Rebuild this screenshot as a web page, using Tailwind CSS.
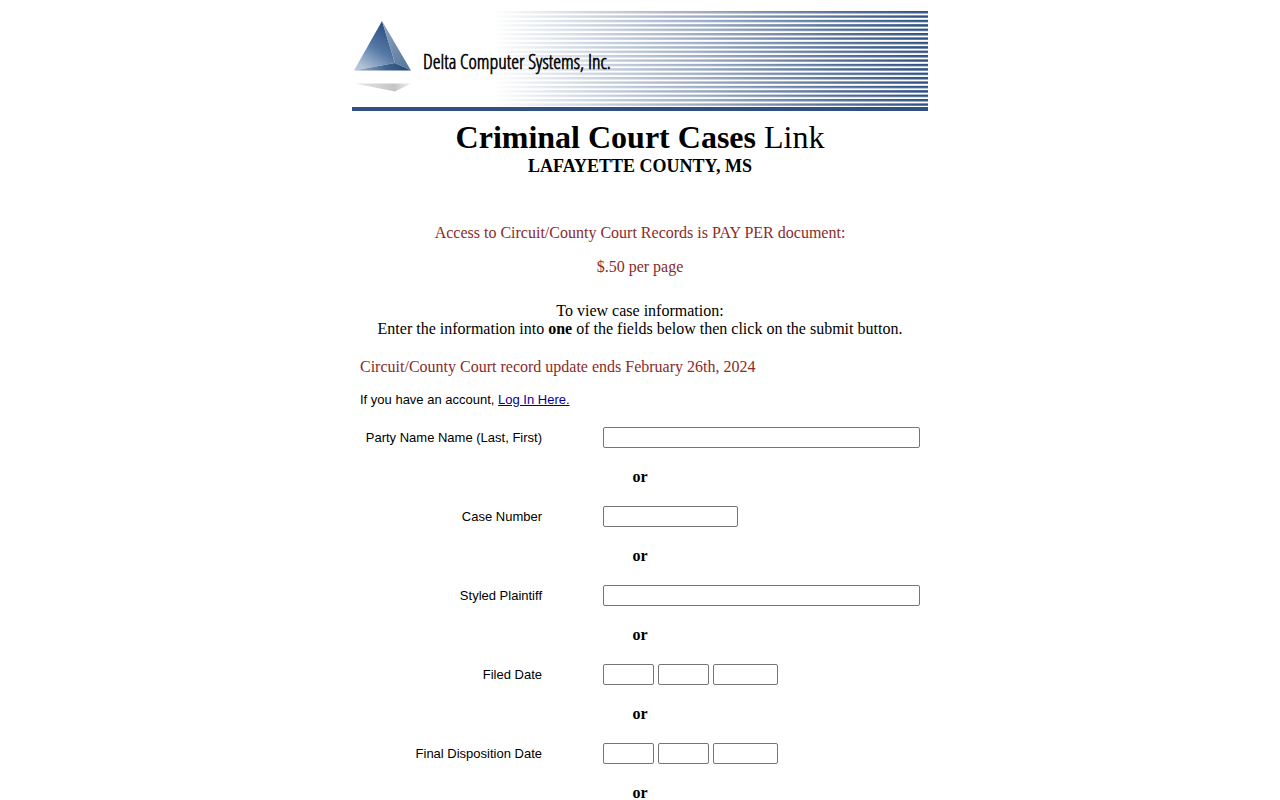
<!DOCTYPE html>
<html lang="en">

<head>
  <meta charset="UTF-8">
  <title>Criminal Court Cases Link</title>
  <script src="https://cdn.jsdelivr.net/npm/@tailwindcss/browser@4"></script>
</head>

<body class="bg-white text-black font-['Liberation_Serif',serif] text-base leading-[18px]">

  <div class="w-[45%] min-w-[560px] mx-auto pt-2">
    <header>
      <svg viewBox="0 0 576 103" class="block w-full" role="img" aria-label="Delta Computer Systems, Inc.">
        <defs>
          <linearGradient id="fade" gradientUnits="userSpaceOnUse" x1="140" y1="0" x2="576" y2="0">
            <stop offset="0" stop-color="#2e5080" stop-opacity="0" />
            <stop offset="0.25" stop-color="#2e5080" stop-opacity="0.26" />
            <stop offset="0.5" stop-color="#2e5080" stop-opacity="0.5" />
            <stop offset="0.8" stop-color="#2e5080" stop-opacity="0.82" />
            <stop offset="1" stop-color="#2e5080" />
          </linearGradient>
          <linearGradient id="front" x1="0.8" y1="0.1" x2="0.3" y2="1">
            <stop offset="0" stop-color="#2b5083" />
            <stop offset="0.5" stop-color="#5578a5" />
            <stop offset="1" stop-color="#b4c5da" />
          </linearGradient>
          <linearGradient id="side" x1="0" y1="0" x2="0.7" y2="1">
            <stop offset="0" stop-color="#8fa6c4" />
            <stop offset="1" stop-color="#5b789e" />
          </linearGradient>
          <linearGradient id="base" x1="0" y1="0" x2="1" y2="0">
            <stop offset="0" stop-color="#a3b6cf" />
            <stop offset="0.55" stop-color="#426593" />
            <stop offset="1" stop-color="#1d4274" />
          </linearGradient>
          <linearGradient id="shadow" x1="0" y1="0" x2="1" y2="0">
            <stop offset="0" stop-color="#e8e8e8" />
            <stop offset="0.7" stop-color="#c4c4c4" />
            <stop offset="1" stop-color="#f0f0f0" />
          </linearGradient>
          <pattern id="stripes" patternUnits="userSpaceOnUse" x="0" y="3" width="576" height="4.4">
            <rect width="576" height="2.4" fill="url(#fade)" />
          </pattern>
        </defs>
        <rect x="144" y="3" width="432" height="95" fill="url(#stripes)" />
        <rect y="99" width="576" height="4" fill="#2f5080" />
        <path d="M30 13 L2 62.500 L43 55 Z" fill="url(#front)" />
        <path d="M30 13 L43 55 L59 62.500 Z" fill="url(#side)" />
        <path d="M2 62.500 L43 55 L59 62.500 Z" fill="url(#base)" />
        <path d="M3 75.500 L59 75.500 L43 83.500 Z" fill="url(#shadow)" />
        <text x="71" y="61" font-size="20" stroke="#000" stroke-width="0.6" class="font-light font-['Open_Sans_Condensed_Light','Open_Sans_Condensed',sans-serif]">Delta Computer Systems, Inc.</text>
      </svg>
    </header>

    <main class="px-2 pt-2">
      <div class="text-center">
        <h1 class="text-[32px] leading-[37px]"><b>Criminal Court Cases</b> Link</h1>
        <h2 class="text-lg leading-5 font-bold">LAFAYETTE COUNTY, MS</h2>

        <div class="mt-12 text-[#892b2b]">
          <p>Access to Circuit/County Court Records is PAY PER document:</p>
          <p class="mt-4">$.50 per page</p>
        </div>

        <p class="mt-[26px]">To view case information:<br>
          Enter the information into <b>one</b> of the fields below then click on the submit button.</p>
      </div>

      <p class="mt-5 text-[#892b2b]">Circuit/County Court record update ends February 26th, 2024</p>
      <p class="mt-[15px] text-[13px] font-['Liberation_Sans',sans-serif]">If you have an account, <a href="#" class="text-[#0000a0] underline">Log In Here.</a></p>

      <form class="mt-[9px]">
        <div class="grid grid-cols-[182fr_317fr] gap-x-[61px] h-[39px] items-center">
          <label for="party" class="text-right text-[13px] font-['Liberation_Sans',sans-serif]">Party Name Name (Last, First)</label>
          <input type="text" id="party" class="w-full h-[21px] border border-[#767676] rounded-xs px-1 text-sm">
        </div>
        <p class="h-10 leading-10 text-center font-bold">or</p>

        <div class="grid grid-cols-[182fr_317fr] gap-x-[61px] h-[39px] items-center">
          <label for="case-number" class="text-right text-[13px] font-['Liberation_Sans',sans-serif]">Case Number</label>
          <input type="text" id="case-number" class="w-[135px] h-[21px] border border-[#767676] rounded-xs px-1 text-sm">
        </div>
        <p class="h-10 leading-10 text-center font-bold">or</p>

        <div class="grid grid-cols-[182fr_317fr] gap-x-[61px] h-[39px] items-center">
          <label for="plaintiff" class="text-right text-[13px] font-['Liberation_Sans',sans-serif]">Styled Plaintiff</label>
          <input type="text" id="plaintiff" class="w-full h-[21px] border border-[#767676] rounded-xs px-1 text-sm">
        </div>
        <p class="h-10 leading-10 text-center font-bold">or</p>

        <div class="grid grid-cols-[182fr_317fr] gap-x-[61px] h-[39px] items-center">
          <label for="filed-month" class="text-right text-[13px] font-['Liberation_Sans',sans-serif]">Filed Date</label>
          <div class="flex gap-1">
            <input type="text" id="filed-month" aria-label="Filed Date month" maxlength="2" class="w-[51px] h-[21px] border border-[#767676] rounded-xs px-1 text-sm">
            <input type="text" id="filed-day" aria-label="Filed Date day" maxlength="2" class="w-[51px] h-[21px] border border-[#767676] rounded-xs px-1 text-sm">
            <input type="text" id="filed-year" aria-label="Filed Date year" maxlength="4" class="w-[65px] h-[21px] border border-[#767676] rounded-xs px-1 text-sm">
          </div>
        </div>
        <p class="h-10 leading-10 text-center font-bold">or</p>

        <div class="grid grid-cols-[182fr_317fr] gap-x-[61px] h-[39px] items-center">
          <label for="disp-month" class="text-right text-[13px] font-['Liberation_Sans',sans-serif]">Final Disposition Date</label>
          <div class="flex gap-1">
            <input type="text" id="disp-month" aria-label="Final Disposition Date month" maxlength="2" class="w-[51px] h-[21px] border border-[#767676] rounded-xs px-1 text-sm">
            <input type="text" id="disp-day" aria-label="Final Disposition Date day" maxlength="2" class="w-[51px] h-[21px] border border-[#767676] rounded-xs px-1 text-sm">
            <input type="text" id="disp-year" aria-label="Final Disposition Date year" maxlength="4" class="w-[65px] h-[21px] border border-[#767676] rounded-xs px-1 text-sm">
          </div>
        </div>
        <p class="h-10 leading-10 text-center font-bold">or</p>
      </form>
    </main>
  </div>

</body>

</html>
